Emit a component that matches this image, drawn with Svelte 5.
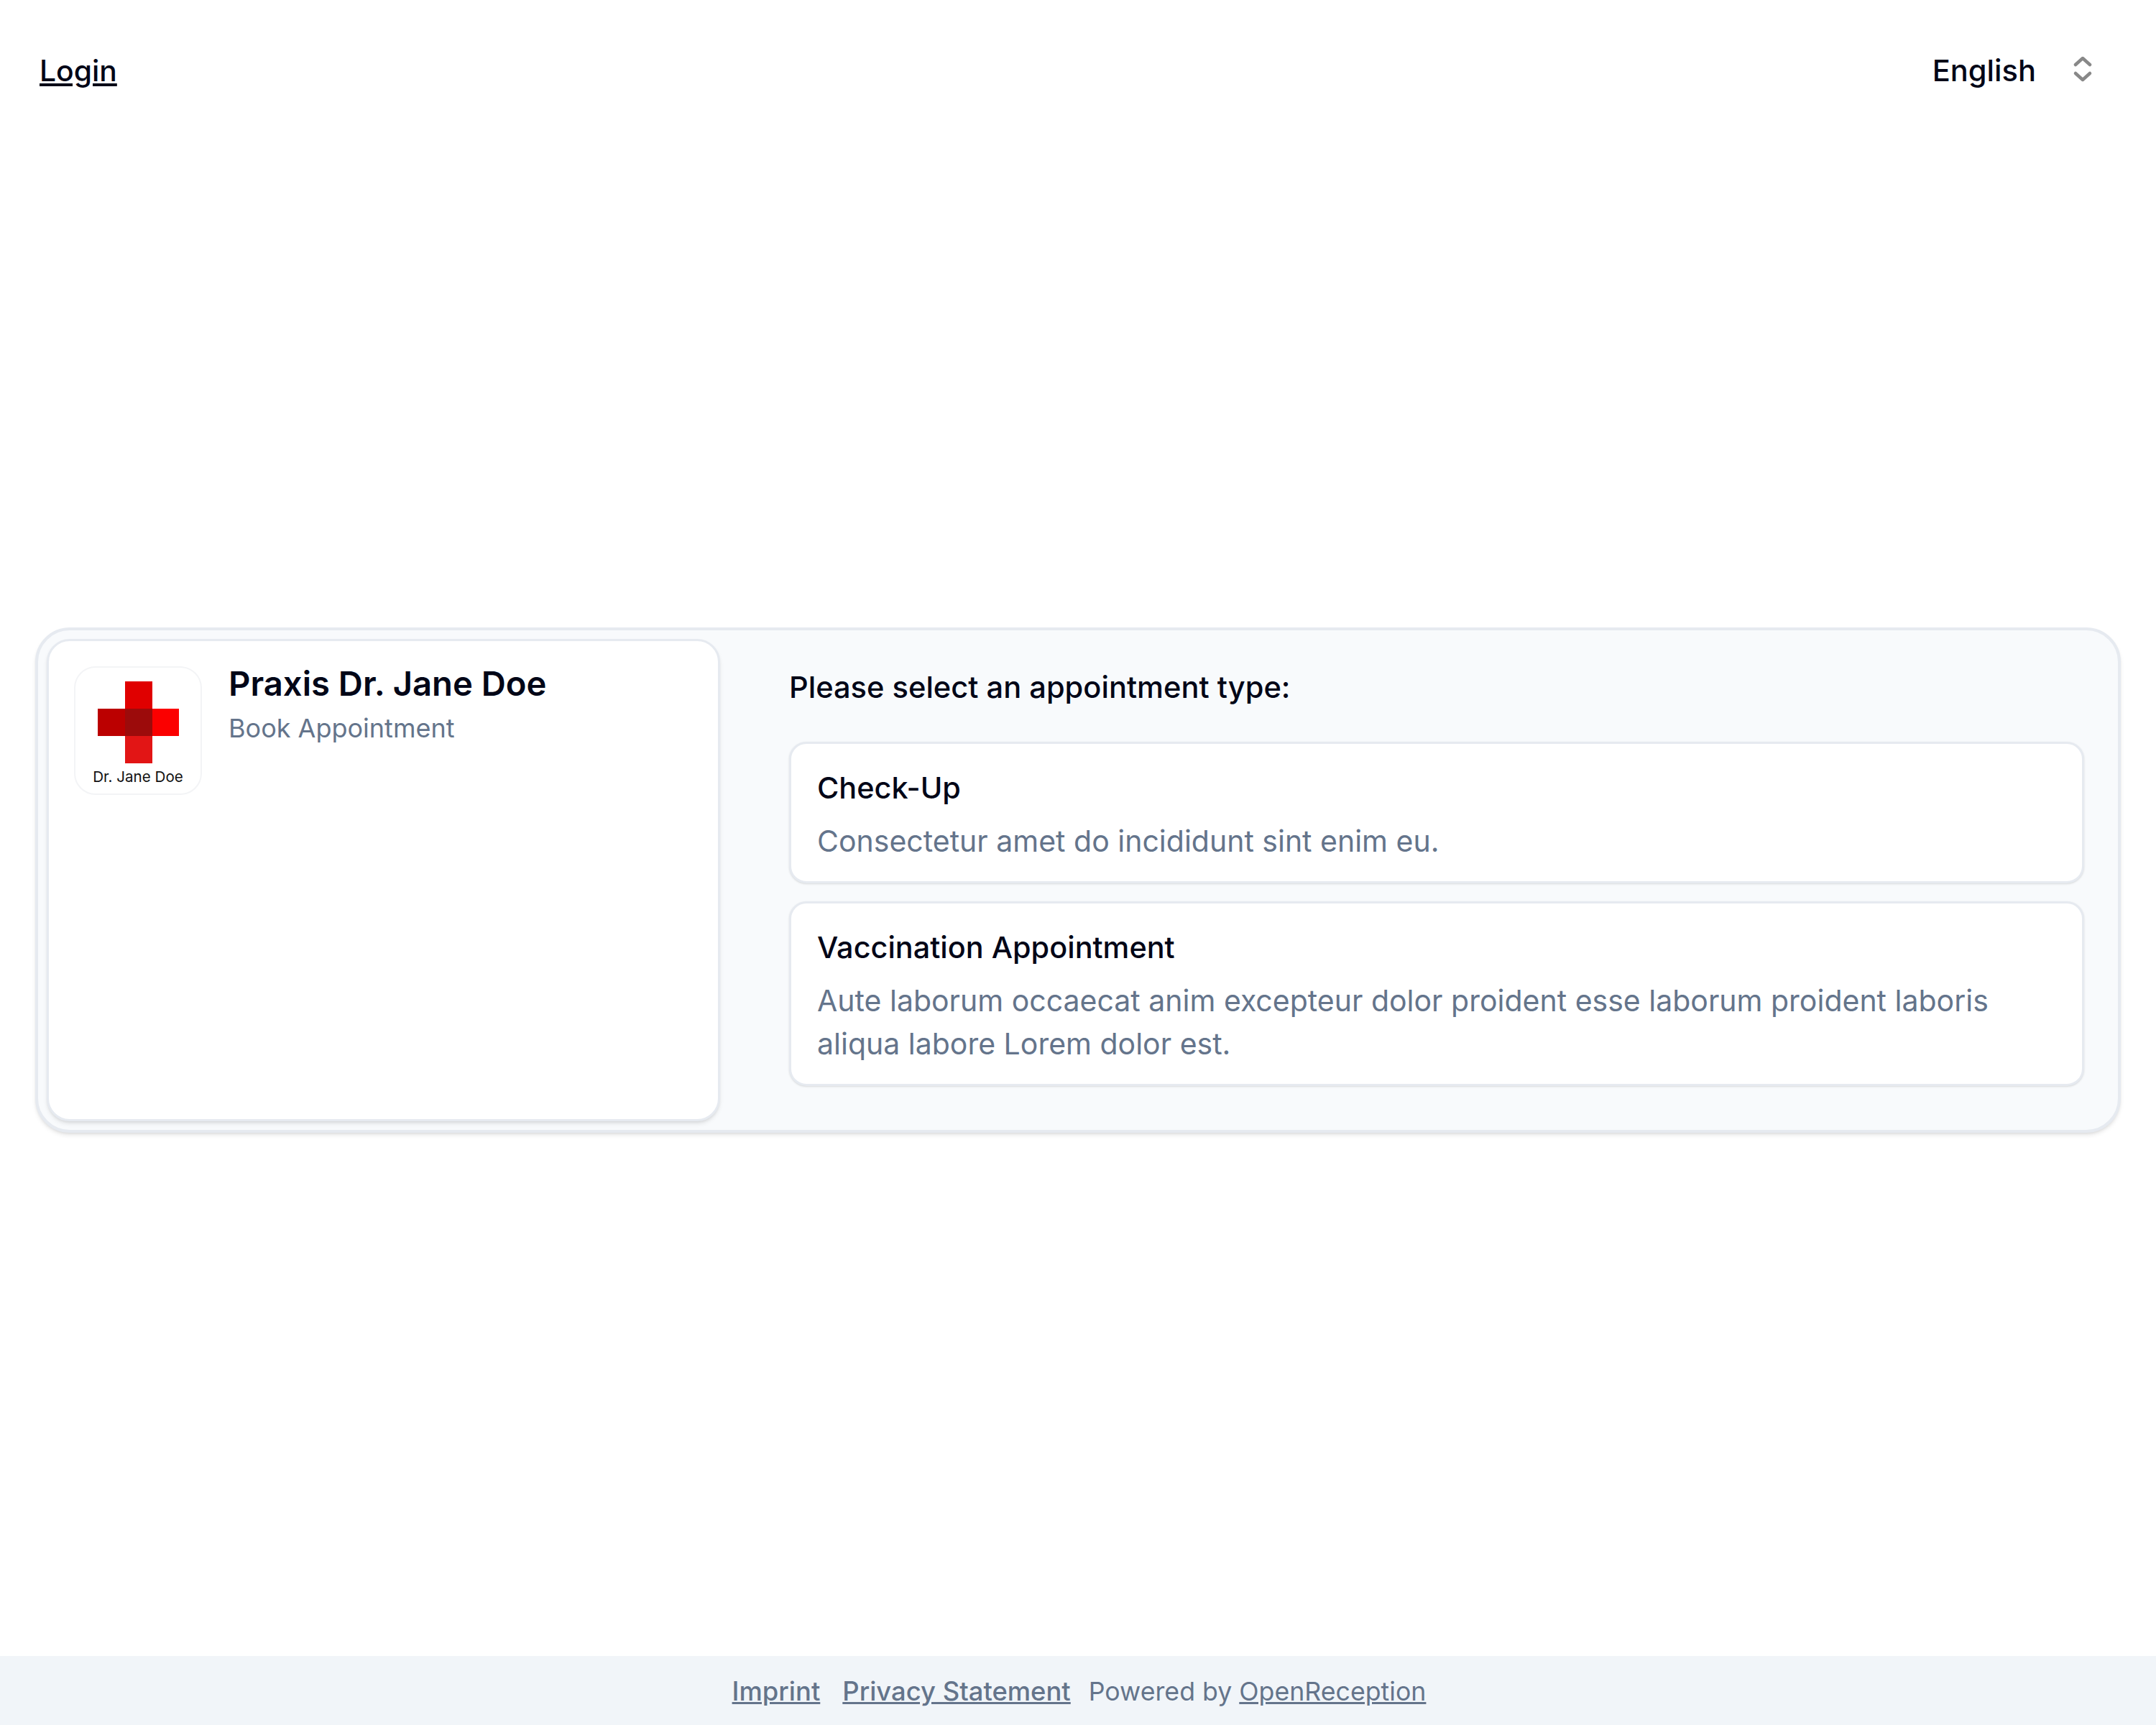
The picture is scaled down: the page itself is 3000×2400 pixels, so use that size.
<script>
  const types = [
    { title: "Check-Up", text: "Consectetur amet do incididunt sint enim eu." },
    {
      title: "Vaccination Appointment",
      text: "Aute laborum occaecat anim excepteur dolor proident esse laborum proident laboris aliqua labore Lorem dolor est."
    }
  ];
</script>

<div class="page">
  <header>
    <a href="#login" class="login">Login</a>
    <div class="lang">
      <span>English</span>
      <svg width="28" height="40" viewBox="0 0 28 40" fill="none" stroke="#888888" stroke-width="4.5" stroke-linecap="round" stroke-linejoin="round">
        <path d="M4 12 14 3 24 12" />
        <path d="M4 24 14 33 24 24" />
      </svg>
    </div>
  </header>

  <main>
    <div class="card">
      <aside>
        <div class="logo">
          <svg width="113" height="114" viewBox="0 0 113 114">
            <rect x="38" y="0" width="38" height="38" fill="#e00000" />
            <rect x="0" y="38" width="38" height="38" fill="#bb0000" />
            <rect x="38" y="38" width="38" height="38" fill="#9c0b0b" />
            <rect x="76" y="38" width="37" height="38" fill="#fb0000" />
            <rect x="38" y="76" width="38" height="38" fill="#e21515" />
          </svg>
          <span>Dr. Jane Doe</span>
        </div>
        <div class="info">
          <h1>Praxis Dr. Jane Doe</h1>
          <p>Book Appointment</p>
        </div>
      </aside>

      <section>
        <h2>Please select an appointment type:</h2>
        <div class="types">
          {#each types as type}
            <button class="type">
              <h3>{type.title}</h3>
              <p>{type.text}</p>
            </button>
          {/each}
        </div>
      </section>
    </div>
  </main>

  <footer>
    <a href="#imprint" class="strong">Imprint</a>
    <a href="#privacy" class="strong">Privacy Statement</a>
    <span>Powered by <a href="#openreception">OpenReception</a></span>
  </footer>
</div>

<style>
  :global(body) {
    margin: 0;
    background: #ffffff;
    font-family: Inter, "Liberation Sans", sans-serif;
  }

  .page {
    display: flex;
    flex-direction: column;
    min-height: 2400px;
    color: #020617;
  }

  header {
    display: flex;
    justify-content: space-between;
    align-items: center;
    height: 144px;
    box-sizing: border-box;
    padding: 52px 88px 0 55px;
  }

  .login {
    color: #020617;
    font-size: 40.8px;
    line-height: 60px;
    font-weight: 500;
  }

  .lang {
    display: flex;
    align-items: center;
    gap: 51px;
    font-size: 41.6px;
    line-height: 60px;
    font-weight: 500;
  }

  main {
    flex: 1;
    display: flex;
    align-items: center;
    padding: 0 49px;
  }

  .card {
    flex: 1;
    display: flex;
    padding: 12px;
    background: #f8fafc;
    border: 4px solid #e6eaf0;
    border-radius: 48px;
    box-shadow: 0 4px 6px -1px rgba(0, 0, 0, 0.1), 0 2px 4px -2px rgba(0, 0, 0, 0.1);
  }

  aside {
    box-sizing: border-box;
    width: 937px;
    flex-shrink: 0;
    display: flex;
    align-items: flex-start;
    gap: 37px;
    padding: 35px;
    background: #ffffff;
    border: 3px solid #e6eaf0;
    border-radius: 32px;
    box-shadow: 0 4px 6px -1px rgba(0, 0, 0, 0.1), 0 2px 4px -2px rgba(0, 0, 0, 0.1);
  }

  .logo {
    box-sizing: border-box;
    width: 178px;
    height: 179px;
    display: flex;
    flex-direction: column;
    align-items: center;
    padding-top: 19px;
    background: #ffffff;
    border: 2px solid #f3f4f6;
    border-radius: 30px;
  }

  .logo svg {
    display: block;
  }

  .logo span {
    font-size: 20.6px;
    line-height: 38px;
    color: #111111;
    white-space: nowrap;
  }

  .info h1 {
    margin: 0;
    font-size: 47.2px;
    line-height: 48px;
    font-weight: 600;
  }

  .info p {
    margin: 8px 0 0;
    font-size: 36px;
    line-height: 60px;
    color: #64748b;
  }

  section {
    flex: 1;
    padding: 37px 35px 49px 96px;
  }

  h2 {
    margin: 0 0 46px;
    font-size: 41.6px;
    line-height: 60px;
    font-weight: 500;
  }

  .types {
    display: flex;
    flex-direction: column;
    gap: 25px;
  }

  .type {
    display: block;
    width: 100%;
    box-sizing: border-box;
    padding: 31px 36px 26px;
    font: inherit;
    color: inherit;
    text-align: left;
    background: #ffffff;
    border: 3px solid #e6eaf0;
    border-radius: 24px;
    box-shadow: 0 1px 3px 0 rgba(0, 0, 0, 0.1), 0 1px 2px -1px rgba(0, 0, 0, 0.1);
  }

  .type h3 {
    margin: 0 0 14px;
    font-size: 41.4px;
    line-height: 60px;
    font-weight: 500;
  }

  .type p {
    margin: 0;
    font-size: 41px;
    line-height: 60px;
    color: #64748b;
  }

  footer {
    box-sizing: border-box;
    height: 96px;
    padding: 2px 0 0 3px;
    display: flex;
    justify-content: center;
    align-items: center;
    background: #f1f5f9;
    color: #64748b;
    font-size: 35.7px;
    line-height: 54px;
  }

  footer a {
    color: #64748b;
  }

  footer > a:first-child {
    margin-right: 31px;
  }

  footer > a:nth-child(2) {
    margin-right: 25px;
  }

  .strong {
    font-size: 36.4px;
    font-weight: 500;
  }
</style>
